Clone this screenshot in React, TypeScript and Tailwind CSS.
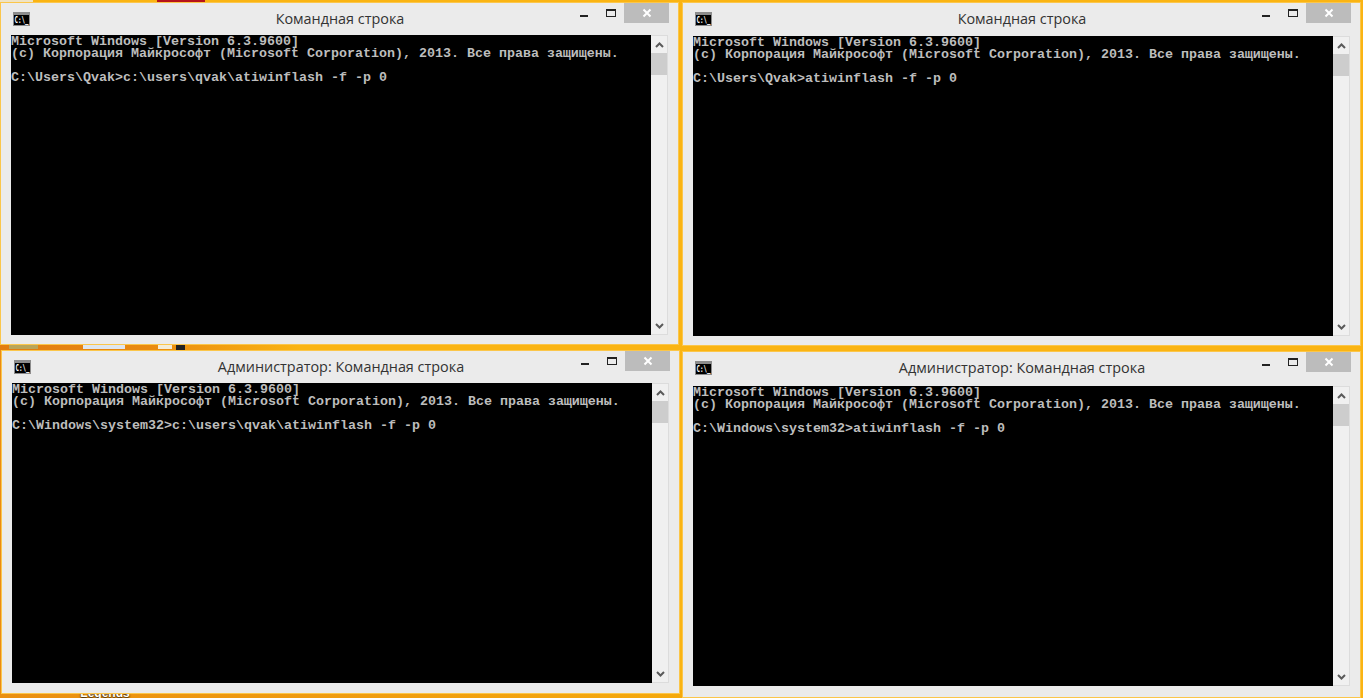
function CmdIcon() {
  return (
    <svg width="17" height="14" viewBox="0 0 17 14" className="block">
      <rect width="17" height="14" fill="#8c8c8c" />
      <rect x="1" y="3" width="15" height="10" fill="#000" />
      <text x="1.5" y="10.8" fontSize="8" fontWeight="700" fontFamily="'DejaVu Sans Mono', monospace" fill="#fff" textLength="14" lengthAdjust="spacingAndGlyphs">
        C:\_
      </text>
    </svg>
  );
}

function Chevron({ down }: { down?: boolean }) {
  return (
    <svg width="9" height="6" viewBox="0 0 9 6" className="block">
      <path d={down ? 'M1 1l3.5 3.5L8 1' : 'M1 5l3.5-3.5L8 5'} fill="none" stroke="#5a5a5a" strokeWidth="2" />
    </svg>
  );
}

function CaptionButtons() {
  return (
    <div className="flex items-start">
      <div className="w-[8px] h-[2px] mt-[12px] bg-[#222] mr-[18px]" />
      <div className="w-[10px] h-[8px] mt-[6px] border border-t-2 border-[#222] mr-[8px]" />
      <div className="w-[45px] h-[20px] bg-[#bcbcbc] flex items-center justify-center">
        <svg width="10" height="10" viewBox="0 0 10 10">
          <path d="M1.5 1.5l7 7M8.5 1.5l-7 7" stroke="#fff" strokeWidth="2" />
        </svg>
      </div>
    </div>
  );
}

function CmdWindow({
  title,
  prompt,
  command,
  className,
  titleClass,
}: {
  title: string;
  prompt: string;
  command: string;
  className: string;
  titleClass: string;
}) {
  return (
    <div className={`relative w-[677px] self-start bg-[#ebebeb] shadow-[0_0_0_1px_#fbc64a] flex flex-col pl-[10px] pr-[9px] ${className}`}>
      <div className={`relative flex items-start justify-between ${titleClass}`}>
        <div className="pl-[2px] pt-[9px]">
          <CmdIcon />
        </div>
        <div className="absolute inset-x-0 top-[6px] text-center text-[14.4px] leading-[20px] text-[#333] font-['Open_Sans',sans-serif]">
          {title}
        </div>
        <div className="relative">
          <CaptionButtons />
        </div>
      </div>
      <div className="flex h-[300px]">
        <div className="w-[640px] pt-[1px] bg-black text-[#bdbdbd] font-['Liberation_Mono',monospace] font-bold text-[13.33px] leading-[12px] whitespace-pre">
          <div>Microsoft Windows [Version 6.3.9600]</div>
          <div>(c) Корпорация Майкрософт (Microsoft Corporation), 2013. Все права защищены.</div>
          <div className="h-[12px]" />
          <div>
            {prompt}
            {command}
          </div>
        </div>
        <div className="w-[17px] bg-[#f0f0f0] border border-l-0 border-[#dcdcdc] flex flex-col items-center">
          <div className="h-[17px] flex items-center justify-center">
            <Chevron />
          </div>
          <div className="w-full h-[22px] bg-[#cdcdcd]" />
          <div className="mt-auto h-[17px] flex items-center justify-center">
            <Chevron down />
          </div>
        </div>
      </div>
    </div>
  );
}

export default function App() {
  return (
    <div className="relative w-[1363px] h-[698px] overflow-hidden bg-[#fab413]">
      {/* bits of the desktop that show between the windows */}
      <div className="absolute left-0 top-[340px] w-[300px] h-[14px] bg-gradient-to-r from-[#e27c10] via-[#e98a10] to-[#fab413]" />
      <div className="absolute left-0 top-[350px] w-[2px] h-[348px] bg-[#ea8a12]" />
      <div className="absolute left-0 top-[690px] w-[683px] h-[8px] bg-gradient-to-r from-[#ea8f10] to-[#f5a90c]" />
      <div className="absolute left-[157px] top-0 w-[48px] h-[3px] bg-[#b5121b]" />
      <div className="absolute left-0 top-0 w-[33px] h-[3px] bg-[#efe3c4]" />
      <div className="absolute left-[9px] top-[345px] w-[29px] h-[4px] bg-[#b9a55a]" />
      <div className="absolute left-[83px] top-[345px] w-[42px] h-[4px] bg-[#dfe6ee]" />
      <div className="absolute left-[158px] top-[345px] w-[14px] h-[4px] bg-[#f4ecd6]" />
      <div className="absolute left-[176px] top-[345px] w-[9px] h-[5px] bg-[#222]" />
      <div className="absolute left-[80px] top-[686px] w-[50px] text-center text-[12px] leading-[14px] font-bold text-white [text-shadow:0_1px_2px_#000] font-['Liberation_Sans',sans-serif]">
        Legends
      </div>

      <div className="relative grid grid-cols-[682px_681px] grid-rows-[345px_353px] h-full">
        <CmdWindow
          className="ml-[1px] mt-[3px] pb-[9px]"
          titleClass="h-[32px]"
          title="Командная строка"
          prompt="C:\Users\Qvak>"
          command="c:\users\qvak\atiwinflash -f -p 0"
        />
        <CmdWindow
          className="ml-[1px] mt-[3px] pb-[9px]"
          titleClass="h-[33px]"
          title="Командная строка"
          prompt="C:\Users\Qvak>"
          command="atiwinflash -f -p 0"
        />
        <CmdWindow
          className="ml-[2px] mt-[6px] pb-[10px]"
          titleClass="h-[32px]"
          title="Администратор: Командная строка"
          prompt="C:\Windows\system32>"
          command="c:\users\qvak\atiwinflash -f -p 0"
        />
        <CmdWindow
          className="ml-[1px] mt-[7px] pb-[11px]"
          titleClass="h-[34px]"
          title="Администратор: Командная строка"
          prompt="C:\Windows\system32>"
          command="atiwinflash -f -p 0"
        />
      </div>
    </div>
  );
}
